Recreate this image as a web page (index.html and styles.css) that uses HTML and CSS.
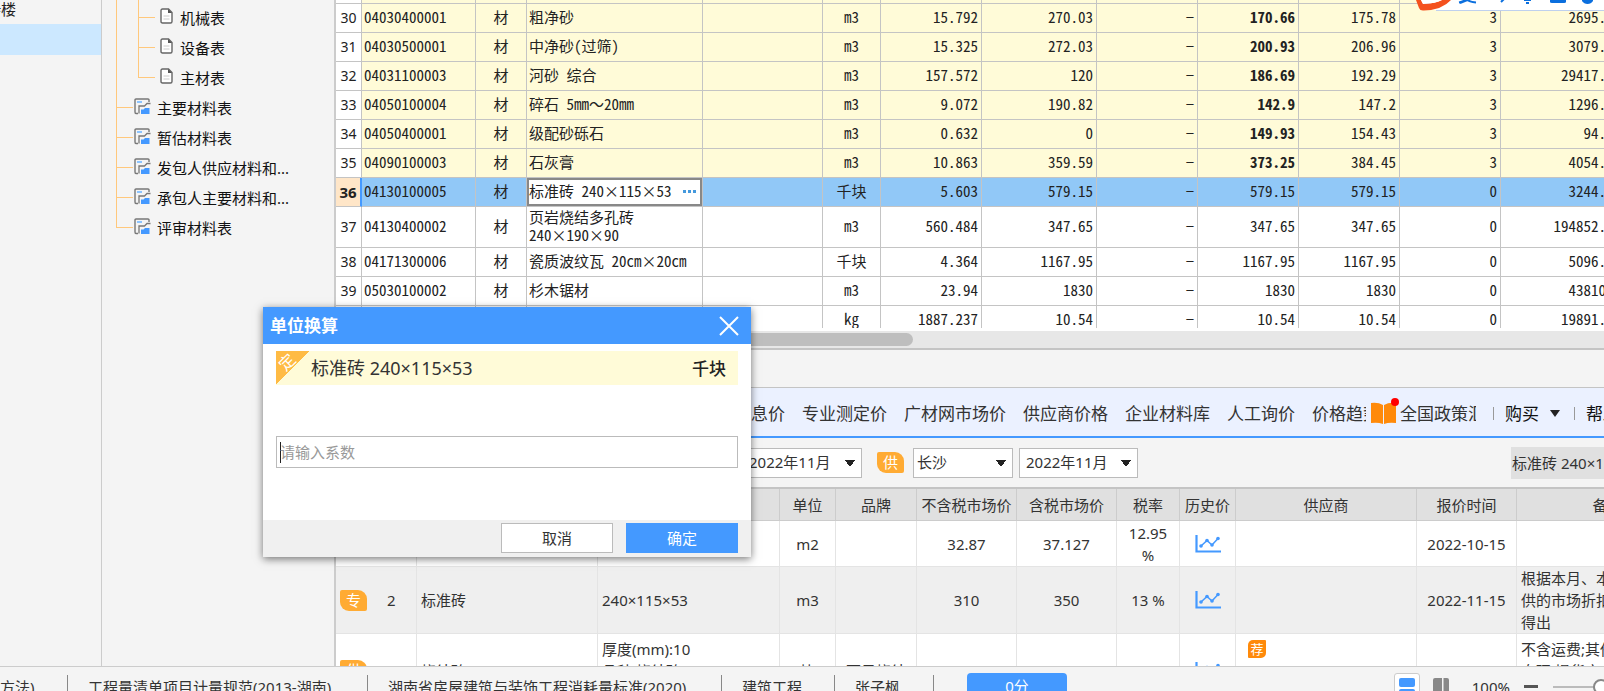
FILE: index.html
```html
<!DOCTYPE html>
<html lang="zh-CN">
<head>
<meta charset="utf-8">
<title>单位换算</title>
<link rel="stylesheet" href="styles.css">
</head>
<body>
<svg class="defs" width="0" height="0" aria-hidden="true">
  <symbol id="doc" viewBox="0 0 13 16"><path d="M2.500 1H8.500L12 4.500V13.500Q12 15 10.500 15H2.500Q1 15 1 13.500V2.500Q1 1 2.500 1Z" fill="#fff" stroke="#666" stroke-width="1.400"/><path d="M8 1V5H12Z" fill="#555"/><path d="M3.500 8H9.500M3.500 11H9.500" stroke="#ccc"/></symbol>
  <symbol id="sheet" viewBox="0 0 17 17"><path d="M15 4V2Q15 1 14 1H2Q1 1 1 2V14Q1 15.500 2 15.500H4" fill="none" stroke="#777" stroke-width="1.400"/><path d="M3 3H8V5H3Z" fill="#8cc4ff"/><path d="M16.500 5.500H13L10.500 8H5V15.500" fill="none" stroke="#777" stroke-width="1.300"/><path d="M7 16V11.500H9.500L11 10H15.500V16Z" fill="#4499ff"/></symbol>
  <symbol id="chart" viewBox="0 0 26 18"><path d="M1.500 0V16.500H26" fill="none" stroke="#4499ff" stroke-width="2.200"/><path d="M6 11L12 5.500L17 10L23 3.500" fill="none" stroke="#4499ff" stroke-width="1.600"/><g fill="#4499ff"><circle cx="6" cy="11" r="1.800"/><circle cx="12" cy="5.500" r="1.800"/><circle cx="17" cy="10" r="1.800"/><circle cx="23" cy="3.500" r="1.800"/></g></symbol>
</svg>

<div class="workspace">
  <aside class="projects">
    <div class="project">5#楼</div>
    <div class="project selected"></div>
  </aside>

  <nav class="tree">
    <ul class="branch">
      <li class="group">
        <ul class="branch leaves">
          <li><svg class="doc"><use href="#doc"/></svg>机械表</li>
          <li><svg class="doc"><use href="#doc"/></svg>设备表</li>
          <li><svg class="doc"><use href="#doc"/></svg>主材表</li>
        </ul>
      </li>
      <li><svg class="sheet"><use href="#sheet"/></svg>主要材料表</li>
      <li><svg class="sheet"><use href="#sheet"/></svg>暂估材料表</li>
      <li><svg class="sheet"><use href="#sheet"/></svg>发包人供应材料和...</li>
      <li><svg class="sheet"><use href="#sheet"/></svg>承包人主要材料和...</li>
      <li><svg class="sheet"><use href="#sheet"/></svg>评审材料表</li>
    </ul>
  </nav>

  <main class="content">
    <section class="materials">
      <div class="materials-scroll">
      <table class="grid">
        <colgroup><col class="w26"><col class="w114"><col class="w51"><col class="w176"><col class="w120"><col class="w58"><col class="w101"><col class="w115"><col class="w101"><col class="w101"><col class="w101"><col class="w101"><col class="w124"></colgroup>
        <tbody>
          <tr class="tinted sliver"><th></th><td></td><td></td><td></td><td></td><td></td><td></td><td></td><td></td><td></td><td></td><td></td><td></td></tr>
          <tr class="tinted"><th>30</th><td>04030400001</td><td>材</td><td>粗净砂</td><td></td><td>m3</td><td>15.792</td><td>270.03</td><td>−</td><td>170.66</td><td>175.78</td><td>3</td><td>2695.06</td></tr>
          <tr class="tinted"><th>31</th><td>04030500001</td><td>材</td><td>中净砂(过筛)</td><td></td><td>m3</td><td>15.325</td><td>272.03</td><td>−</td><td>200.93</td><td>206.96</td><td>3</td><td>3079.25</td></tr>
          <tr class="tinted"><th>32</th><td>04031100003</td><td>材</td><td>河砂 综合</td><td></td><td>m3</td><td>157.572</td><td>120</td><td>−</td><td>186.69</td><td>192.29</td><td>3</td><td>29417.12</td></tr>
          <tr class="tinted"><th>33</th><td>04050100004</td><td>材</td><td>碎石 5mm～20mm</td><td></td><td>m3</td><td>9.072</td><td>190.82</td><td>−</td><td>142.9</td><td>147.2</td><td>3</td><td>1296.39</td></tr>
          <tr class="tinted"><th>34</th><td>04050400001</td><td>材</td><td>级配砂砾石</td><td></td><td>m3</td><td>0.632</td><td>0</td><td>−</td><td>149.93</td><td>154.43</td><td>3</td><td>94.76</td></tr>
          <tr class="tinted"><th>35</th><td>04090100003</td><td>材</td><td>石灰膏</td><td></td><td>m3</td><td>10.863</td><td>359.59</td><td>−</td><td>373.25</td><td>384.45</td><td>3</td><td>4054.61</td></tr>
          <tr class="current"><th>36</th><td>04130100005</td><td>材</td><td class="editing"><div class="editor">标准砖 240×115×53<button type="button" class="more" aria-label="更多"><i></i><i></i><i></i></button></div></td><td></td><td>千块</td><td>5.603</td><td>579.15</td><td>−</td><td>579.15</td><td>579.15</td><td>0</td><td>3244.98</td></tr>
          <tr class="tall"><th>37</th><td>04130400002</td><td>材</td><td>页岩烧结多孔砖<br>240×190×90</td><td></td><td>m3</td><td>560.484</td><td>347.65</td><td>−</td><td>347.65</td><td>347.65</td><td>0</td><td>194852.26</td></tr>
          <tr><th>38</th><td>04171300006</td><td>材</td><td>瓷质波纹瓦 20cm×20cm</td><td></td><td>千块</td><td>4.364</td><td>1167.95</td><td>−</td><td>1167.95</td><td>1167.95</td><td>0</td><td>5096.93</td></tr>
          <tr><th>39</th><td>05030100002</td><td>材</td><td>杉木锯材</td><td></td><td>m3</td><td>23.94</td><td>1830</td><td>−</td><td>1830</td><td>1830</td><td>0</td><td>43810.2</td></tr>
          <tr><th></th><td></td><td></td><td></td><td></td><td>kg</td><td>1887.237</td><td>10.54</td><td>−</td><td>10.54</td><td>10.54</td><td>0</td><td>19891.48</td></tr>
        </tbody>
      </table>
      </div>
      <div class="scrollbar"><div class="thumb"></div></div>
    </section>

    <section class="prices">
      <div class="spacer"></div>
      <div class="tabs">
        <a href="#">信息价</a><a href="#">专业测定价</a><a href="#">广材网市场价</a><a href="#">供应商价格</a><a href="#">企业材料库</a><a href="#">人工询价</a><a href="#" class="trend">价格趋势</a>
        <a href="#" class="policy"><svg class="book" viewBox="0 0 28 28"><path d="M0 6Q7 5 12 8V27Q7 25 0 26Z" fill="#ff8a0a"/><path d="M13 8Q18 5 25 6V26Q18 25 13 27Z" fill="#ff8a0a"/><circle cx="24" cy="5" r="4" fill="#f00"/></svg><span class="policy-text">全国政策汇</span></a>
        <span class="divider"></span><button type="button" class="menu">购买<svg class="arrow" viewBox="0 0 10 7"><path d="M0 0H10L5 7Z"/></svg></button><span class="divider"></span><button type="button" class="menu">帮助</button>
      </div>
      <div class="filters">
        <select class="month first" aria-label="信息价月份"><option>2022年11月</option></select>
        <span class="tag">供</span>
        <select class="city" aria-label="城市"><option>长沙</option></select>
        <select class="month" aria-label="月份"><option>2022年11月</option></select>
        <div class="keyword">标准砖 240×115×53</div>
      </div>
      <div class="quotes-scroll">
      <table class="quotes">
        <colgroup><col class="w81"><col class="w181"><col class="w182"><col class="w56"><col class="w81"><col class="w100"><col class="w100"><col class="w63"><col class="w56"><col class="w181"><col class="w100"><col class="w182"></colgroup>
        <thead><tr><th></th><th></th><th></th><th>单位</th><th>品牌</th><th>不含税市场价</th><th>含税市场价</th><th>税率</th><th>历史价</th><th>供应商</th><th>报价时间</th><th>备注</th></tr></thead>
        <tbody>
          <tr class="r1"><td></td><td></td><td></td><td>m2</td><td></td><td>32.87</td><td>37.127</td><td>12.95 %</td><td><svg class="chart"><use href="#chart"/></svg></td><td></td><td>2022-10-15</td><td></td></tr>
          <tr class="r2"><td><div class="rank"><span class="tag">专</span><span>2</span></div></td><td class="left">标准砖</td><td class="left">240×115×53</td><td>m3</td><td></td><td>310</td><td>350</td><td>13 %</td><td><svg class="chart"><use href="#chart"/></svg></td><td></td><td>2022-11-15</td><td class="left">根据本月、本地区提<br>供的市场折扣率计算<br>得出</td></tr>
          <tr class="r3"><td><div class="rank"><span class="tag">供</span><span>3</span></div></td><td class="left">烧结砖</td><td class="left">厚度(mm):10<br>品种:烧结砖<br>规格:标准</td><td>块</td><td>西昊烧结</td><td></td><td></td><td></td><td><svg class="chart"><use href="#chart"/></svg></td><td class="left supplier"><span class="rec">荐</span><a href="#">广东中昊景地陶瓷有限公司</a></td><td></td><td class="left">不含运费;其他费<br>自理,提货方式<br>面议</td></tr>
        </tbody>
      </table>
      </div>
    </section>
  </main>
</div>

<footer class="status">
  <span class="item s1">方法)</span><span class="item s2">工程量清单项目计量规范(2013-湖南)</span><span class="item s3">湖南省房屋建筑与装饰工程消耗量标准(2020)</span><span class="item s4">建筑工程</span><span class="item s5">张子枫</span>
  <button type="button" class="score">0分</button>
  <div class="zoom">
    <button type="button" class="view on" aria-label="上下布局"><svg viewBox="0 0 16 16"><rect width="16" height="9" rx="2" fill="#4499ff"/><rect y="11" width="16" height="5" rx="2" fill="#4499ff"/></svg></button>
    <button type="button" class="view" aria-label="左右布局"><svg viewBox="0 0 16 16"><path d="M0 2Q0 0 2 0H9V16H0ZM10.500 0H14Q16 0 16 2V16H10.500Z" fill="#888"/></svg></button>
    <span class="percent">100%</span>
    <button type="button" class="minus" aria-label="缩小"></button>
    <div class="slider"><i></i></div>
  </div>
</footer>

<div class="ime"><svg viewBox="0 0 188 12">
  <path d="M14 0H188V10H14Z" fill="#fff"/><path d="M20 10.500H188" stroke="#bfd0ee"/>
  <path d="M0 0L3 8Q4 11 8 10.500Q26 10 35 0H26Q20 3.500 7 4L5 0Z" fill="#f4511e"/><path d="M5 0L7 4Q20 3.500 26 0Z" fill="#fff"/>
  <path d="M43 2.500Q48 1.500 50 -1Q53 2 60 2.500M54 -1L44 3" fill="none" stroke="#0b6fde" stroke-width="2"/>
  <path d="M85 2L88 -1" stroke="#0b6fde" stroke-width="2"/><path d="M108 0H115M110 3H113" stroke="#0b6fde" stroke-width="2"/>
  <path d="M134 0H150V2Q150 3 148 3H136Q134 3 134 2Z" fill="#0b6fde"/><path d="M166 0H177V1Q175 4 171.500 4Q168 4 166 1Z" fill="#0b6fde"/>
</svg></div>

<form class="dialog" role="dialog" aria-labelledby="dlg-title">
  <header class="dialog-title"><h1 id="dlg-title">单位换算</h1><button type="button" class="close" aria-label="关闭"><svg viewBox="0 0 20 20"><path d="M1 1L19 19M19 1L1 19" stroke="#fff" stroke-width="2"/></svg></button></header>
  <div class="dialog-body">
    <div class="material"><span class="ribbon"><span>定</span></span><span class="name">标准砖 240×115×53</span><b>千块</b></div>
    <input class="factor" type="text" placeholder="请输入系数" aria-label="系数">
  </div>
  <footer class="dialog-actions"><button type="button">取消</button><button type="submit" class="primary">确定</button></footer>
</form>
</body>
</html>
```
FILE: styles.css
```css
* { box-sizing: border-box; }
body {
  margin: 0; height: 100vh; overflow: hidden; display: flex; flex-direction: column;
  position: relative; background: #f4f4f4; color: #333;
  font: 15px/21px "Noto Sans", "Noto Sans CJK SC", sans-serif;
}
a { color: inherit; text-decoration: none; }
button, input, select { font: inherit; color: inherit; }
.defs { position: absolute; }
.workspace { flex: 1; min-height: 0; display: flex; }

.projects { flex: 0 0 102px; border-right: 1px solid #ccc; overflow: hidden; color: #222; }
.project { height: 24px; line-height: 18px; width: 16px; direction: rtl; white-space: nowrap; }
.project.selected { height: 31px; width: auto; background: #cce8ff; }

.tree { flex: 0 0 234px; overflow: hidden; border-right: 2px solid #ccc; color: #111; }
.branch { list-style: none; margin: 0; padding: 0 0 0 14px; }
.branch li { height: 30px; display: flex; align-items: center; gap: 6px; padding: 6px 0 0 18px; position: relative; line-height: 24px; }
.branch li.group { height: auto; padding: 0; }
.leaves { padding-left: 22px; width: 100%; }
.leaves li { gap: 7px; padding-left: 22px; }
.branch li::before { content: ""; position: absolute; left: 0; top: 0; width: 16px; height: 17px; border-left: 1px solid #ffc87c; border-bottom: 1px solid #ffc87c; }
.branch li:not(:last-child)::after { content: ""; position: absolute; left: 0; top: 0; bottom: 0; border-left: 1px solid #ffc87c; }
.branch li.group::before { display: none; }
.doc { width: 13px; height: 16px; }
.sheet { width: 17px; height: 17px; }
.branch svg { flex: none; margin-bottom: 4px; }

.content { flex: 1; min-width: 0; display: flex; flex-direction: column; }
.materials { flex: 1; min-height: 0; display: flex; flex-direction: column; background: #fff; }
.materials-scroll { flex: 1; min-height: 0; overflow: hidden; margin-bottom: 3px; }
table { border-collapse: separate; border-spacing: 0; table-layout: fixed; }
.grid { width: 1289px; color: #222; font: 15px/18px "Noto Sans Mono CJK SC", "Noto Sans CJK SC", monospace; }
.grid tr { height: 29px; }
.grid tr.sliver { height: 4px; }
.grid tr.sliver th, .grid tr.sliver td { padding: 0; }
.grid tr.tall { height: 41px; }
.grid th, .grid td { padding: 0 3px 2px; border-right: 1px solid #c4c4c4; border-bottom: 1px solid #c4c4c4; text-align: right; white-space: nowrap; }
.grid th { padding: 0; text-align: center; font: 14px/18px "Noto Sans", sans-serif; background: #fff; }
.grid td:nth-child(2), .grid td:nth-child(4) { text-align: left; padding-left: 2px; }
.grid td:nth-child(3), .grid td:nth-child(6) { text-align: center; }
.tinted td { background: #fffbd8; }
.tinted td:nth-child(10) { font-weight: bold; }
.current td { background: #91c8f7; }
.grid .current th { background: #ffe6c8; font-weight: bold; font-size: 15px; border-right: 2px solid #4499ff; }
.grid .current td.editing { padding: 0; background: #fff; }
.editor { height: 28px; border: 2px solid #888; display: flex; align-items: center; justify-content: space-between; padding: 0 4px 2px 0; }
.more { border: 0; background: none; padding: 0; display: flex; gap: 2px; }
.more i { width: 3px; height: 3px; background: #4499dd; }
.w26 { width: 26px; } .w51 { width: 51px; } .w56 { width: 56px; } .w58 { width: 58px; } .w63 { width: 63px; }
.w81 { width: 81px; } .w100 { width: 100px; } .w101 { width: 101px; } .w114 { width: 114px; }
.w115 { width: 115px; } .w120 { width: 120px; } .w124 { width: 124px; } .w176 { width: 176px; } .w181 { width: 181px; } .w182 { width: 182px; }
.scrollbar { flex: none; height: 19px; background: #e7e7e7; border-bottom: 2px solid #c4c4c4; padding: 2px 0; }
.thumb { width: 577px; height: 13px; border-radius: 7px; background: #bebebe; }

.prices { flex: 0 0 316px; min-height: 0; display: flex; flex-direction: column; }
.spacer { flex: none; height: 37px; }
.tabs { flex: none; height: 51px; background: #ebf1ff; border-top: 1px solid #c4c4c4; border-bottom: 2px solid #4499ff; display: flex; align-items: center; gap: 17px; padding: 2px 0 0 398px; font-size: 17px; white-space: nowrap; overflow: hidden; }
.tabs > * { flex: none; }
.tabs .trend { width: 54px; overflow: hidden; }
.policy { display: flex; align-items: center; gap: 1px; margin-left: -12px; }
.book { width: 28px; height: 28px; margin-bottom: 4px; }
.policy-text { width: 76px; overflow: hidden; }
.divider { width: 1px; height: 13px; background: #999; }
.menu { border: 0; background: none; margin: 0 -3px 0 -6px; padding: 0; display: flex; align-items: center; gap: 11px; color: #111; }
.arrow { width: 10px; height: 7px; fill: #222; }
.filters { flex: none; height: 49px; display: flex; align-items: center; padding-left: 405px; overflow: hidden; }
select { appearance: none; height: 30px; border: 1px solid #bbb; border-radius: 0; padding: 0 6px; background: #fff conic-gradient(from -36deg at 50% 100%, #222 72deg, transparent 0) no-repeat right 6px top 11px / 10px 7px; }
.month { width: 119px; }
.month.first { width: 121px; padding-left: 7px; }
.city { width: 100px; padding: 0 3px; }
.filters .city { margin-right: 6px; }
.filters .tag { margin: 0 9px 0 15px; }
.tag { flex: none; width: 27px; height: 21px; border-radius: 2px 9px 2px 9px; background: #ffab33; color: #fff; text-align: center; line-height: 21px; }
.keyword { flex: none; width: 180px; height: 32px; margin-left: auto; margin-right: -87px; line-height: 32px; padding-left: 1px; background: #e0e0e0; white-space: nowrap; }
.quotes-scroll { flex: 1; min-height: 0; overflow: hidden; border-top: 2px solid #c4c4c4; }
.quotes { width: 1363px; line-height: 22px; }
.quotes th { height: 32px; padding: 0; font-weight: normal; background: #e0e0e0; border-right: 1px solid #ccc; border-bottom: 1px solid #ccc; }
.quotes td { padding: 0 4px; text-align: center; border-right: 1px solid #e4e4e4; border-bottom: 1px solid #e4e4e4; background: #fff; }
.quotes .r1 { height: 46px; }
.quotes .r2 { height: 67px; }
.quotes .r2 td { background: #efefef; }
.quotes .r3 { height: 74px; }
.quotes td.left { text-align: left; }
.rank { display: flex; align-items: center; gap: 20px; }
.chart { width: 26px; height: 18px; display: block; margin: 0 auto; }
.quotes td.supplier { vertical-align: top; padding: 6px 1px 0 12px; }
.supplier a { display: block; color: #4499ff; }
.supplier .rec { display: block; width: 18px; height: 18px; margin-bottom: 4px; line-height: 18px; font-size: 13px; text-align: center; color: #fff; background: #ff8a0a; border-radius: 5px 1px 5px 1px; }

.status { flex: none; height: 25px; border-top: 1px solid #ccc; display: flex; overflow: hidden; white-space: nowrap; padding-top: 8px; color: #333; line-height: 24px; }
.item { flex: none; border-right: 1px solid #888; padding-left: 20px; }
.s1 { width: 68px; padding-left: 0; }
.s2 { width: 300px; }
.s3 { width: 354px; }
.s4 { width: 113px; }
.s5 { width: 99px; }
.score { flex: none; width: 100px; height: 26px; margin: -2px 0 0 33px; border: 0; border-radius: 4px 4px 0 0; background: #4499ff; color: #fff; padding: 0; }
.zoom { margin-left: auto; display: flex; flex: none; align-items: flex-start; }
.view { width: 26px; height: 26px; border: 0; padding: 5px; margin: -2px 8px 0 0; background: none; }
.view svg { width: 16px; height: 16px; display: block; }
.view.on { border: 1px solid #ccc; border-radius: 3px; background: #fff; padding: 4px; }
.percent { margin: 0 14px 0 10px; }
.minus { width: 14px; height: 3px; border: 0; padding: 0; background: #555; margin: 10px 15px 0 0; }
.slider { width: 51px; height: 2px; background: #bbb; margin: 11px 0 0; position: relative; }
.slider i { position: absolute; left: 40px; top: -7px; width: 16px; height: 16px; border: 2px solid #888; border-radius: 8px; background: #fff; }

.ime { position: absolute; right: 0; top: 0; width: 188px; height: 12px; overflow: hidden; }
.ime svg { display: block; width: 188px; height: 12px; }

.dialog { position: absolute; left: 263px; top: 307px; width: 488px; margin: 0; background: #fff; box-shadow: 0 2px 8px #0008; }
.dialog-title { height: 37px; background: #4499ff; color: #fff; display: flex; align-items: center; justify-content: space-between; padding: 0 12px 0 7px; }
.dialog-title h1 { margin: 0; font-size: 17px; line-height: 37px; }
.close { width: 20px; height: 20px; padding: 0; border: 0; background: none; }
.close svg { display: block; width: 20px; height: 20px; }
.dialog-body { padding: 7px 13px 52px; }
.material { height: 34px; background: #fffbd8; display: flex; align-items: center; font-size: 18px; }
.material b { margin-left: auto; padding-right: 12px; font-size: 17px; font-weight: 500; color: #222; }
.ribbon { width: 34px; height: 34px; margin-right: 1px; background: linear-gradient(135deg, #ffbb44 50%, transparent 50%); color: #fff; }
.ribbon span { display: block; width: 22px; font-size: 16px; line-height: 22px; text-align: center; transform: rotate(-45deg); }
.factor { display: block; width: 100%; height: 32px; margin-top: 51px; border: 1px solid #bbb; padding: 0 3px; outline: 0; background: #fff linear-gradient(#222, #222) no-repeat 3px 5px / 1px 21px; }
.factor::placeholder { color: #999; }
.dialog-actions { height: 37px; background: #f0f0f0; display: flex; justify-content: flex-end; align-items: flex-start; gap: 13px; padding: 3px 13px 0; }
.dialog-actions button { width: 112px; height: 30px; padding: 0; border: 1px solid #bbb; background: #fff; }
.dialog-actions .primary { background: #4499ff; border-color: #4499ff; color: #fff; }
```
